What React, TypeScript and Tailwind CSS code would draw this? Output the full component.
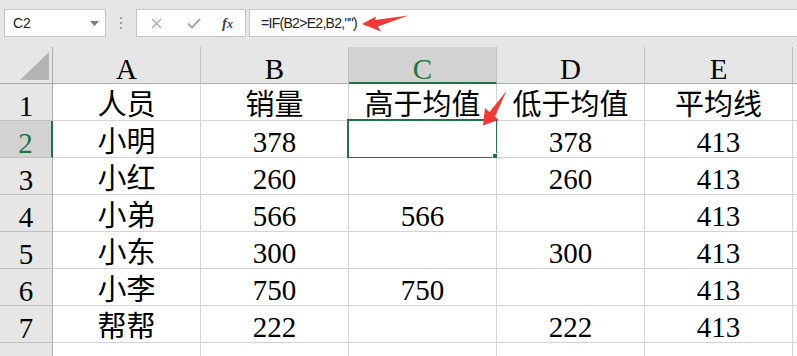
import React from "react";

const rows: string[][] = [
  ["人员", "销量", "高于均值", "低于均值", "平均线"],
  ["小明", "378", "", "378", "413"],
  ["小红", "260", "", "260", "413"],
  ["小弟", "566", "566", "", "413"],
  ["小东", "300", "", "300", "413"],
  ["小李", "750", "750", "", "413"],
  ["帮帮", "222", "", "222", "413"],
];

const cols = ["A", "B", "C", "D", "E"];

const SERIF = "font-['Liberation_Serif','Noto_Sans_CJK_SC',serif]";
const LATIN = "font-['Liberation_Serif',serif]";

const isNum = (v: string) => /^[0-9]+$/.test(v);

export default function App() {
  return (
    <div className="relative w-[797px] h-[356px] overflow-hidden bg-white">
      {/* formula bar */}
      <div className="flex items-start h-[47px] bg-[#e6e6e6] pt-[9px]">
        <div className="ml-[4px] w-[102px] h-[28px] border border-[#c6c6c6] bg-white flex items-center justify-between pl-[8px] pr-[6px]">
          <span className="text-[14px] text-[#222] font-['Liberation_Sans',sans-serif]">C2</span>
          <svg width="9" height="5" viewBox="0 0 9 5"><path d="M0 0 L9 0 L4.5 5 Z" fill="#7a7a7a" /></svg>
        </div>
        <div className="w-[30px] h-[28px] flex flex-col items-center justify-center gap-[3px]">
          <div className="w-[2px] h-[2px] bg-[#a0a0a0]" />
          <div className="w-[2px] h-[2px] bg-[#a0a0a0]" />
          <div className="w-[2px] h-[2px] bg-[#a0a0a0]" />
        </div>
        <div className="w-[110px] h-[28px] border border-[#c6c6c6] bg-white flex items-center">
          <svg className="ml-[14px]" width="11" height="11" viewBox="0 0 11 11">
            <path d="M1 1 L10 10 M10 1 L1 10" stroke="#a8a8a8" strokeWidth="1.3" />
          </svg>
          <svg className="ml-[25px]" width="14" height="11" viewBox="0 0 14 11">
            <path d="M1 5.5 L5 9.5 L13 1" stroke="#a8a8a8" strokeWidth="2" fill="none" />
          </svg>
          <span className="ml-[21px] text-[15px] italic font-bold text-[#444] leading-none font-['Liberation_Serif',serif]">
            f<span className="text-[12px]">x</span>
          </span>
        </div>
        <div className="ml-[3px] flex-1 h-[28px] border border-r-0 border-[#c6c6c6] bg-white flex items-center pl-[11px]">
          <span className="text-[14px] tracking-[-0.7px] text-[#222] font-['Liberation_Sans',sans-serif]">
            =IF(B2&gt;E2,B2,"")
          </span>
        </div>
      </div>

      {/* grid */}
      <div
        className={`grid grid-cols-[53px_148px_148px_148px_148px_148px_1fr] auto-rows-[37px] text-[29px] leading-[29px] text-black ${SERIF}`}
      >
        {/* corner */}
        <div className="bg-[#e6e6e6] border-r border-b border-[#ababab] flex items-end justify-end pr-[3px] pb-[3px]">
          <svg width="29" height="28" viewBox="0 0 29 28"><path d="M29 0 L29 28 L0 28 Z" fill="#b4b4b4" /></svg>
        </div>
        {cols.map((c) =>
          c === "C" ? (
            <div key={c} className={`bg-[#d2d2d2] border-r border-r-[#bfbfbf] border-b-2 border-b-[#217346] text-center pt-[8px] text-[#217346] ${LATIN}`}>
              {c}
            </div>
          ) : (
            <div key={c} className={`bg-[#e6e6e6] border-r border-r-[#bfbfbf] border-b border-b-[#ababab] text-center pt-[8px] ${LATIN}`}>
              {c}
            </div>
          )
        )}
        <div className="bg-[#e6e6e6] border-b border-b-[#ababab]" />

        {rows.map((r, i) => (
          <React.Fragment key={i}>
            {i === 1 ? (
              <div className={`bg-[#d2d2d2] border-r-2 border-r-[#217346] border-b border-b-[#bfbfbf] text-center pt-[8px] text-[#217346] ${LATIN}`}>
                {i + 1}
              </div>
            ) : (
              <div className={`bg-[#e6e6e6] border-r border-r-[#ababab] border-b border-b-[#bfbfbf] text-center pt-[8px] ${LATIN}`}>
                {i + 1}
              </div>
            )}
            {r.map((v, j) => (
              <div key={j} className={`relative bg-white border-r border-b border-[#d4d4d4] text-center pt-[7px] whitespace-nowrap ${isNum(v) ? LATIN : SERIF}`}>
                {v}
                {i === 1 && j === 2 && (
                  <div className="absolute left-[-2px] top-[-2px] w-[151px] h-[40px] border-2 border-[#217346]">
                    <div className="absolute right-[-4px] bottom-[-4px] w-[8px] h-[8px] bg-white flex items-center justify-center">
                      <div className="w-[6px] h-[6px] bg-[#217346]" />
                    </div>
                  </div>
                )}
              </div>
            ))}
            <div className="bg-white border-b border-[#d4d4d4]" />
          </React.Fragment>
        ))}
        <div className={`bg-[#e6e6e6] border-r border-r-[#ababab] text-center pt-[8px] ${LATIN}`}>8</div>
        {cols.map((c) => (
          <div key={c} className="bg-white border-r border-[#d4d4d4]" />
        ))}
        <div className="bg-white" />
      </div>

      {/* annotation arrows */}
      <svg className="absolute left-0 top-0 pointer-events-none" width="797" height="356" viewBox="0 0 797 356">
        <polygon points="362,24 376,16.5 375,20 408.5,15.5 378,26.5 381,31.5" fill="#f03a3a" />
        <polygon points="483,125.5 485,108 489.5,112 506.5,91 495,116.5 498.5,120" fill="#f03a3a" />
      </svg>
    </div>
  );
}
